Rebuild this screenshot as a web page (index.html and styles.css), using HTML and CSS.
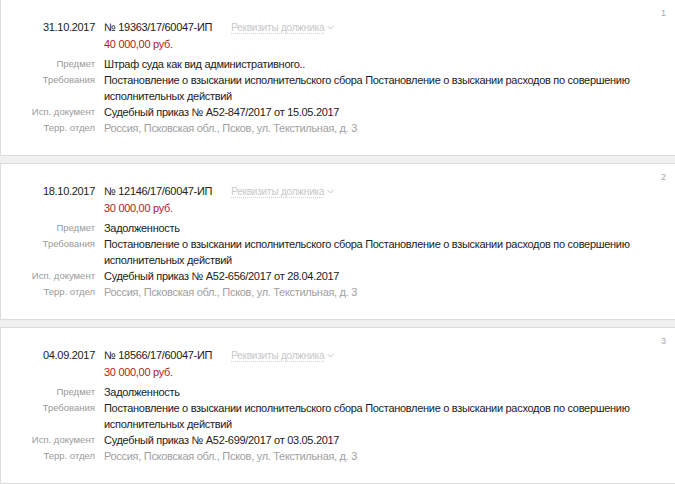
FILE: index.html
```html
<!DOCTYPE html>
<html lang="ru">
<head>
<meta charset="utf-8">
<title>Исполнительные производства</title>
<link rel="stylesheet" href="styles.css">
</head>
<body>
<div class="list">
  <div class="card">
    <span class="idx">1</span>
    <div class="grid">
      <div class="date">31.10.2017</div>
      <div class="head"><span class="num">№ 19363/17/60047-ИП</span><span class="req">Реквизиты должника</span><svg class="chev" width="7" height="5" viewBox="0 0 7 5"><path d="M0.5 1 L3.5 4 L6.5 1" fill="none" stroke="#c4c4c4" stroke-width="1"/></svg></div>
      <div></div>
      <div class="sum">40 000,00 руб.</div>
      <div class="lbl first">Предмет</div><div class="val first">Штраф суда как вид административного..</div>
      <div class="lbl">Требования</div><div class="val">Постановление о взыскании исполнительского сбора Постановление о взыскании расходов по совершению исполнительных действий</div>
      <div class="lbl">Исп. документ</div><div class="val">Судебный приказ № А52-847/2017 от 15.05.2017</div>
      <div class="lbl">Терр. отдел</div><div class="val muted">Россия, Псковская обл., Псков, ул. Текстильная, д. 3</div>
    </div>
  </div>
  <div class="card">
    <span class="idx">2</span>
    <div class="grid">
      <div class="date">18.10.2017</div>
      <div class="head"><span class="num">№ 12146/17/60047-ИП</span><span class="req">Реквизиты должника</span><svg class="chev" width="7" height="5" viewBox="0 0 7 5"><path d="M0.5 1 L3.5 4 L6.5 1" fill="none" stroke="#c4c4c4" stroke-width="1"/></svg></div>
      <div></div>
      <div class="sum">30 000,00 руб.</div>
      <div class="lbl first">Предмет</div><div class="val first">Задолженность</div>
      <div class="lbl">Требования</div><div class="val">Постановление о взыскании исполнительского сбора Постановление о взыскании расходов по совершению исполнительных действий</div>
      <div class="lbl">Исп. документ</div><div class="val">Судебный приказ № А52-656/2017 от 28.04.2017</div>
      <div class="lbl">Терр. отдел</div><div class="val muted">Россия, Псковская обл., Псков, ул. Текстильная, д. 3</div>
    </div>
  </div>
  <div class="card">
    <span class="idx">3</span>
    <div class="grid">
      <div class="date">04.09.2017</div>
      <div class="head"><span class="num">№ 18566/17/60047-ИП</span><span class="req">Реквизиты должника</span><svg class="chev" width="7" height="5" viewBox="0 0 7 5"><path d="M0.5 1 L3.5 4 L6.5 1" fill="none" stroke="#c4c4c4" stroke-width="1"/></svg></div>
      <div></div>
      <div class="sum">30 000,00 руб.</div>
      <div class="lbl first">Предмет</div><div class="val first">Задолженность</div>
      <div class="lbl">Требования</div><div class="val">Постановление о взыскании исполнительского сбора Постановление о взыскании расходов по совершению исполнительных действий</div>
      <div class="lbl">Исп. документ</div><div class="val">Судебный приказ № А52-699/2017 от 03.05.2017</div>
      <div class="lbl">Терр. отдел</div><div class="val muted">Россия, Псковская обл., Псков, ул. Текстильная, д. 3</div>
    </div>
  </div>
</div>
</body>
</html>
```
FILE: styles.css
```css
html, body {
  margin: 0;
  padding: 0;
  background: #ffffff;
  overflow: hidden;
}
body {
  font-family: "Liberation Sans", Arial, sans-serif;
  color: #222222;
}
.list {
  display: flex;
  flex-direction: column;
  gap: 7px;
  background: #f0f0f0;
  margin-top: -1px;
  width: 100%;
}
.card {
  position: relative;
  background: #ffffff;
  border: 1px solid #dcdcdc;
  border-right: none;
  height: 157px;
  box-sizing: border-box;
  padding: 19px 0 0 0;
}
.idx {
  position: absolute;
  top: 7px;
  right: 9px;
  font-size: 9px;
  color: #aaaaaa;
  line-height: 12px;
}
.grid {
  display: grid;
  grid-template-columns: 94px 1fr;
  column-gap: 9px;
  align-items: start;
  padding-right: 20px;
}
.date {
  text-align: right;
  font-size: 11px;
  line-height: 16px;
  letter-spacing: -0.3px;
  color: #222222;
}
.head {
  display: flex;
  align-items: baseline;
  font-size: 11px;
  line-height: 16px;
  letter-spacing: -0.3px;
}
.num {
  color: #222222;
  margin-right: 19px;
}
.req {
  font-size: 10px;
  letter-spacing: -0.2px;
  color: #c8c8c8;
  border-bottom: 1px dotted #d0d0d0;
  line-height: 11px;
}
.chev {
  margin-left: 3px;
  align-self: center;
}
.sum {
  font-size: 11px;
  line-height: 16px;
  letter-spacing: -0.3px;
  color: #b22222;
  margin-top: 1px;
}
.lbl {
  text-align: right;
  font-size: 9.5px;
  line-height: 16px;
  color: #9a9a9a;
}
.val {
  font-size: 11px;
  line-height: 16px;
  letter-spacing: -0.3px;
  color: #222222;
}
.first {
  margin-top: 4px;
}
.muted {
  color: #a0a0a0;
}
```
